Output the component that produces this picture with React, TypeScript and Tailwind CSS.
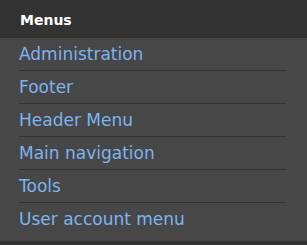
import React from 'react';

const menus = ['Administration', 'Footer', 'Header Menu', 'Main navigation', 'Tools', 'User account menu'];

function App() {
  return (
    <div className="w-[307px] h-[245px] bg-[#333333] font-['DejaVu_Sans',sans-serif]">
      <div className="h-[38px] flex items-center pl-[20px] pt-[2px]">
        <span className="text-white font-bold text-[14px]">Menus</span>
      </div>
      <div className="h-[203px] bg-[#474747] pl-[19px] pr-[21px]">
        <ul>
          {menus.map((m, i) => (
            <li
              key={m}
              className={
                'h-[33px] flex items-center ' +
                (i < menus.length - 1 ? 'border-b border-[#333333]' : '')
              }
            >
              <a href="#" className="text-[#7cb4ef] text-[17px] leading-none">
                {m}
              </a>
            </li>
          ))}
        </ul>
      </div>
    </div>
  );
}

export default App;
